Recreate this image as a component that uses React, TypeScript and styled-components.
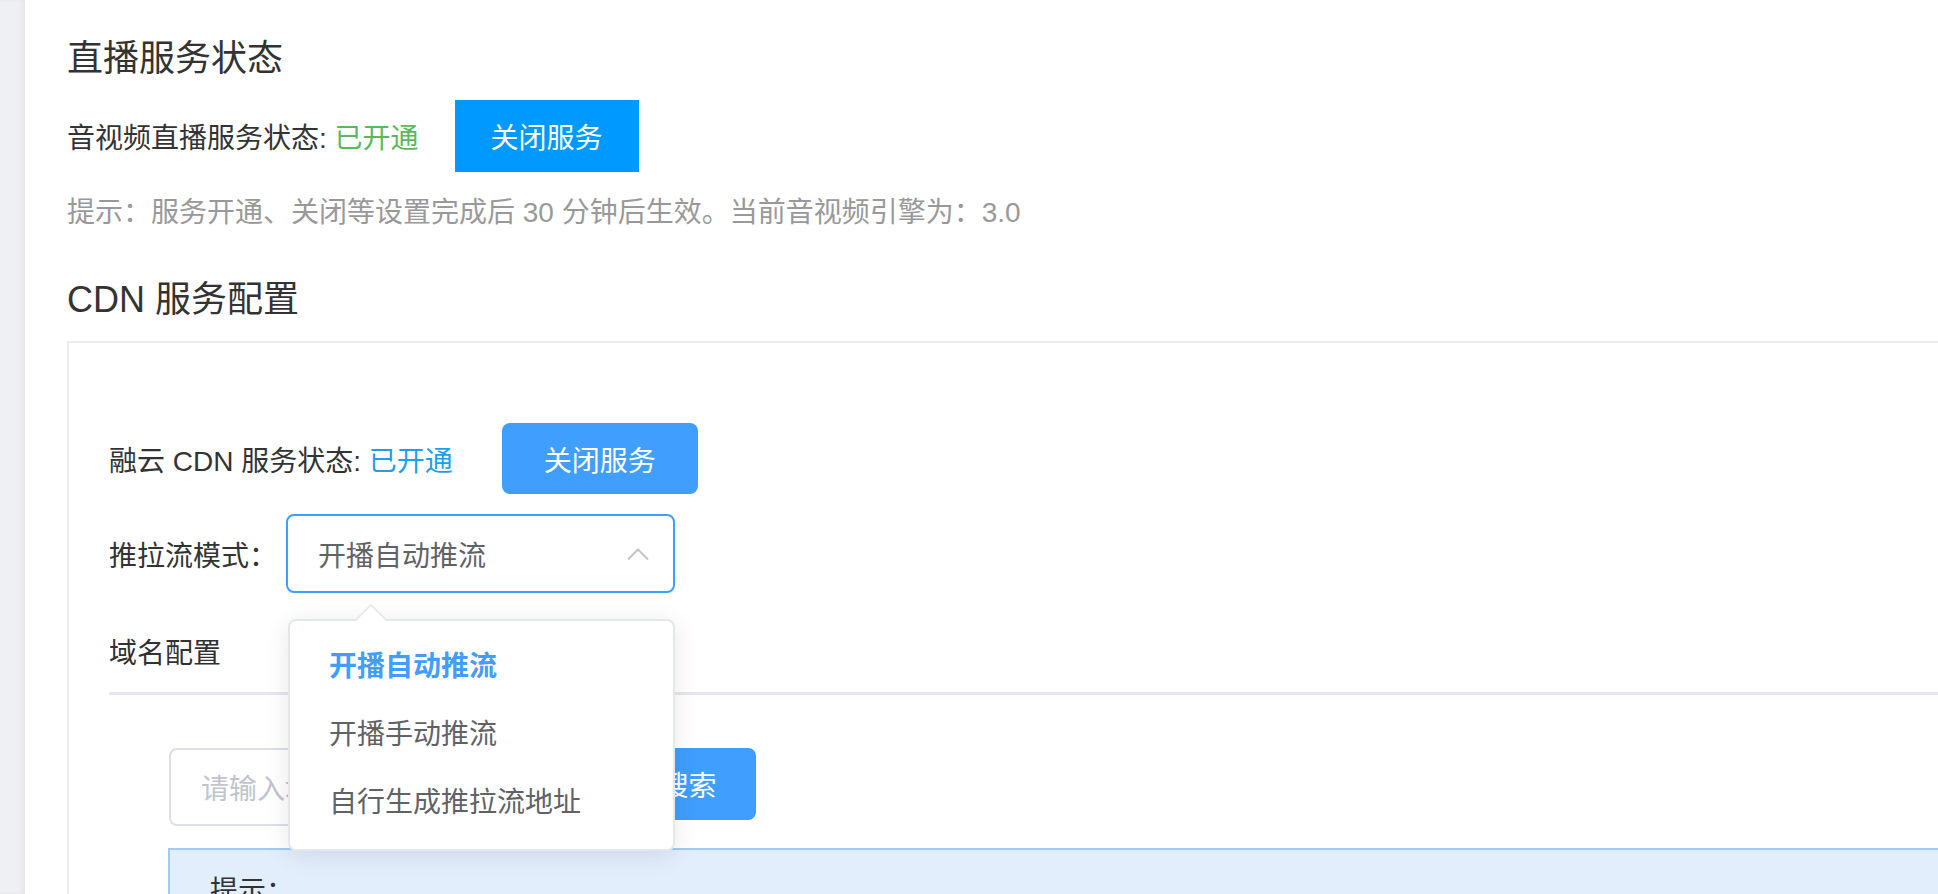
import styled, { createGlobalStyle } from "styled-components";

const GlobalStyle = createGlobalStyle`
  html, body {
    margin: 0;
    padding: 0;
    overflow: hidden;
    background: #ffffff;
  }
  body {
    font-family: "Liberation Sans", "Noto Sans CJK SC", sans-serif;
    color: #333333;
  }
  * {
    box-sizing: border-box;
  }
`;

const Page = styled.div`
  display: flex;
  width: 2000px;
  height: 894px;
`;

const SideStrip = styled.div`
  width: 25px;
  flex-shrink: 0;
  background: #eff0f4;
  box-shadow: inset -3px 0 4px rgba(0, 0, 0, 0.04);
`;

const Main = styled.div`
  flex: 1;
  padding: 39px 0 0 42px;
  display: flex;
  flex-direction: column;
`;

const SectionTitle = styled.h2<{ $gap: number }>`
  margin: 0 0 ${(p) => p.$gap}px;
  font-size: 36px;
  line-height: 40px;
  font-weight: 400;
  color: #333333;
`;

const StatusRow = styled.div<{ $gap: number }>`
  display: flex;
  align-items: center;
  height: 72px;
  font-size: 28px;
  color: #333333;
  margin-bottom: ${(p) => p.$gap}px;
`;

const StatusText = styled.span<{ $color: string }>`
  color: ${(p) => p.$color};
`;

const SquareButton = styled.button<{ $offset: number }>`
  margin-left: ${(p) => p.$offset}px;
  height: 72px;
  padding: 0 36px;
  border: none;
  background: #0099ff;
  color: #ffffff;
  font-family: inherit;
  font-size: 28px;
`;

const RoundButton = styled.button<{ $offset: number; $width: number }>`
  margin-left: ${(p) => p.$offset}px;
  width: ${(p) => p.$width}px;
  height: 71px;
  border: none;
  border-radius: 8px;
  background: #409eff;
  color: #ffffff;
  font-family: inherit;
  font-size: 28px;
  flex-shrink: 0;
`;

const Hint = styled.p`
  margin: 0 0 47px;
  font-size: 28px;
  line-height: 40px;
  color: #999999;
`;

const ConfigBox = styled.div`
  border-top: 2px solid #ebebeb;
  border-left: 2px solid #ebebeb;
  padding: 80px 0 0 40px;
  flex: 1;
`;

const FormRow = styled.div<{ $gap: number }>`
  display: flex;
  align-items: center;
  font-size: 28px;
  color: #333333;
  margin-bottom: ${(p) => p.$gap}px;
`;

const SelectWrap = styled.div`
  position: relative;
  margin-left: 9px;
`;

const SelectBox = styled.div`
  width: 389px;
  height: 79px;
  border: 2px solid #409eff;
  border-radius: 8px;
  display: flex;
  align-items: center;
  justify-content: space-between;
  padding: 0 24px 0 30px;
  font-size: 28px;
  color: #606266;
`;

const Popover = styled.div`
  position: absolute;
  top: 105px;
  left: 2px;
  width: 387px;
  padding: 12px 0;
  background: #ffffff;
  border: 2px solid #e4e7ed;
  border-radius: 8px;
  box-shadow: 0 4px 24px rgba(0, 0, 0, 0.1);
  z-index: 10;

  &::before {
    content: "";
    position: absolute;
    top: -13px;
    left: 70px;
    width: 20px;
    height: 20px;
    background: #ffffff;
    border-top: 2px solid #e4e7ed;
    border-left: 2px solid #e4e7ed;
    transform: rotate(45deg);
    border-top-left-radius: 2px;
  }
`;

const Option = styled.div<{ $active?: boolean }>`
  position: relative;
  height: 68px;
  line-height: 68px;
  padding-left: 39px;
  font-size: 28px;
  font-weight: ${(p) => (p.$active ? 700 : 400)};
  color: ${(p) => (p.$active ? "#409eff" : "#606266")};
`;

const Tabs = styled.div`
  margin-top: 22px;
  border-bottom: 3px solid #e4e7ed;
`;

const TabItem = styled.div`
  display: inline-block;
  height: 77px;
  line-height: 77px;
  font-size: 28px;
  color: #303133;
`;

const TabPane = styled.div`
  padding: 53px 0 0 60px;
`;

const SearchRow = styled.div`
  display: flex;
  align-items: flex-start;
  gap: 12px;
  margin-bottom: 22px;
`;

const SearchInput = styled.div`
  width: 440px;
  height: 78px;
  border: 2px solid #dcdfe6;
  border-radius: 8px;
  padding-left: 30px;
  display: flex;
  align-items: center;
  font-size: 28px;
  color: #c0c4cc;
  white-space: nowrap;
  overflow: hidden;
`;

const SearchButton = styled.button`
  width: 135px;
  height: 72px;
  border: none;
  border-radius: 8px;
  background: #409eff;
  color: #ffffff;
  font-family: inherit;
  font-size: 28px;
`;

const AlertBox = styled.div`
  margin-left: -1px;
  border-top: 2px solid #a3c9f7;
  border-left: 2px solid #a3c9f7;
  background: #e3eefd;
  padding: 22px 0 40px 40px;
  font-size: 28px;
  line-height: 40px;
  color: #333333;
`;

const Chevron = () => (
  <svg width="22" height="14" viewBox="0 0 22 14" fill="none">
    <path d="M1 12.5L11 2.5L21 12.5" stroke="#c0c4cc" strokeWidth="2" />
  </svg>
);

const options = ["开播自动推流", "开播手动推流", "自行生成推拉流地址"];

export default function App() {
  return (
    <>
      <GlobalStyle />
      <Page>
        <SideStrip />
        <Main>
          <SectionTitle $gap={21}>直播服务状态</SectionTitle>
          <StatusRow $gap={21}>
            音视频直播服务状态:&nbsp;
            <StatusText $color="#5cb85c">已开通</StatusText>
            <SquareButton $offset={36}>关闭服务</SquareButton>
          </StatusRow>
          <Hint>
            提示：服务开通、关闭等设置完成后 30 分钟后生效。当前音视频引擎为：3.0
          </Hint>
          <SectionTitle $gap={21}>CDN 服务配置</SectionTitle>
          <ConfigBox>
            <FormRow $gap={20}>
              融云 CDN 服务状态:&nbsp;
              <StatusText $color="#1a9ff2">已开通</StatusText>
              <RoundButton $offset={49} $width={196}>
                关闭服务
              </RoundButton>
            </FormRow>
            <FormRow $gap={0}>
              推拉流模式：
              <SelectWrap>
                <SelectBox>
                  开播自动推流
                  <Chevron />
                </SelectBox>
                <Popover>
                  {options.map((o, i) => (
                    <Option key={o} $active={i === 0}>
                      {o}
                    </Option>
                  ))}
                </Popover>
              </SelectWrap>
            </FormRow>
            <Tabs>
              <TabItem>域名配置</TabItem>
            </Tabs>
            <TabPane>
              <SearchRow>
                <SearchInput>请输入域名进行搜索</SearchInput>
                <SearchButton>搜索</SearchButton>
              </SearchRow>
              <AlertBox>
                提示：
                <br />
                推流域名与播放域名需完成 CNAME 配置后方可生效。
              </AlertBox>
            </TabPane>
          </ConfigBox>
        </Main>
      </Page>
    </>
  );
}
